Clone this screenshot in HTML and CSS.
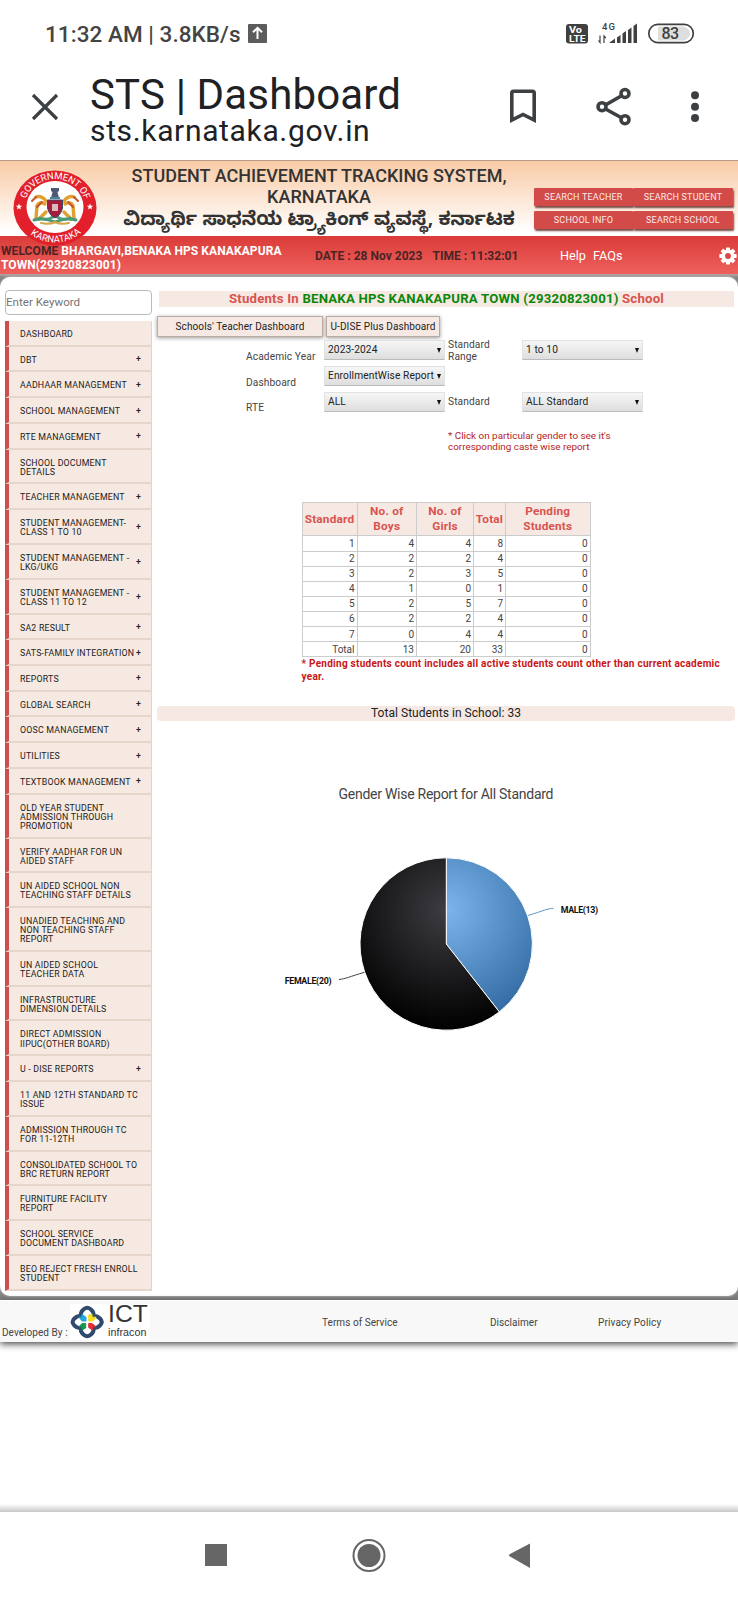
FILE: index.html
```html
<!DOCTYPE html>
<html lang="en">
<head>
<meta charset="utf-8">
<title>STS | Dashboard</title>
<link rel="stylesheet" href="styles.css">
</head>
<body>
<div class="status">
  <span class="clock">11:32 AM | 3.8KB/s</span>
  <svg class="up" width="19" height="19" viewBox="0 0 19 19"><rect width="19" height="19" rx="1" fill="#5c5c5c"/><path d="M9.5 15V4M5 8.3L9.5 3.8L14 8.3" fill="none" stroke="#fff" stroke-width="2"/></svg>
  <svg class="signals" width="132" height="24" viewBox="0 0 132 24">
    <rect x="0" y="2" width="22" height="19.500" rx="3" fill="#404040"/>
    <g font-family="Roboto, sans-serif" font-weight="700" fill="#fff"><text x="3" y="10.500" font-size="9" textLength="13" lengthAdjust="spacingAndGlyphs">Vo</text><text x="3" y="19.500" font-size="9" textLength="16.500" lengthAdjust="spacingAndGlyphs">LTE</text></g>
    <text x="36" y="8" font-family="Roboto, sans-serif" font-size="9.500" font-weight="500" fill="#404040" textLength="13">4G</text>
    <path d="M34 13.500V20.500L32.500 18.500M38 21V14L39.800 16" fill="none" stroke="#404040" stroke-width="1.200"/>
    <path d="M43 21L49 16.500V21ZM51 15.500L54.500 13V21H51ZM56.500 11.500L60 9V21H56.500ZM62 8L65.500 5.500V21H62ZM67.500 4L71 1.500V21H67.500Z" fill="#404040"/>
    <rect x="82.800" y="2.300" width="44.500" height="18.400" rx="9.200" fill="#fff" stroke="#404040" stroke-width="1.700"/>
    <path d="M92 4.500H118Q124 7 124 11.500T118 18.500H92Z" fill="#dedede"/>
    <text x="95.500" y="17" font-family="Roboto, sans-serif" font-size="16" font-weight="500" fill="#404040" textLength="17.500">83</text>
  </svg>
</div>
<div class="browser">
  <svg class="close" width="28" height="28" viewBox="0 0 28 28"><path d="M2 2L26 26M26 2L2 26" stroke="#3c4043" stroke-width="3.200"/></svg>
  <div class="page-id"><div class="page-title">STS | Dashboard</div><div class="page-url">sts.karnataka.gov.in</div></div>
  <svg class="tools" width="192" height="40" viewBox="0 0 192 40">
    <g fill="none" stroke="#3c4043" stroke-width="3.600"><path d="M3.800 6Q3.800 4.300 5.500 4.300H24.500Q26.200 4.300 26.200 6V33L15 27.500L3.800 33Z"/><path d="M117.500 6.500L94 20L117.500 33"/><g fill="#fff"><circle cx="117" cy="6.500" r="4"/><circle cx="94" cy="19.700" r="4"/><circle cx="117" cy="32.700" r="4"/></g></g>
    <g fill="#3c4043"><circle cx="187" cy="8.300" r="4"/><circle cx="187" cy="19.700" r="4"/><circle cx="187" cy="31" r="4"/></g>
  </svg>
</div>

<header class="masthead">
  <svg class="emblem" width="84" height="76" viewBox="0 0 84 76">
    <defs><path id="arcTop" d="M11.700 36.800A30.300 27.800 0 0 1 72.300 36.800"/><path id="arcBottom" d="M4.500 38A37.500 34.500 0 0 0 79.500 38"/></defs>
    <ellipse cx="42" cy="38" rx="41.500" ry="37.500" fill="#e21f2b"/><ellipse cx="42" cy="37" rx="28.500" ry="26" fill="#fff"/>
    <g fill="#fff" font-family="Roboto, sans-serif" font-size="9.500"><text><textPath href="#arcTop" startOffset="8" textLength="76">GOVERNMENT OF</textPath></text><text><textPath href="#arcBottom" startOffset="30" textLength="55">KARNATAKA</textPath></text></g>
    <path id="star" d="M6 33.500L6.900 35.800H9.200L7.400 37.300L8 39.500L6 38.200L4 39.500L4.600 37.300L2.800 35.800H5.100Z" fill="#fff"/><use href="#star" x="71"/>
    <g fill="none" stroke-linecap="round" stroke-linejoin="round"><path d="M33 31C29 26 26 26 23 27M32 34Q26 31 24 36L23 48M33 42L26 49M51 31C55 26 58 26 61 27M52 34Q58 31 60 36L61 48M51 42L58 49" stroke="#e0a032" stroke-width="3.400"/><path d="M23 27L19 31M61 27L65 31M29 32L24 37M55 32L60 37" stroke="#c95627" stroke-width="2"/><path d="M21 50Q31 47 42 52Q53 47 63 50M27 48Q35 52 42 45Q49 52 57 48" stroke="#4c9b78" stroke-width="3"/><path d="M28 53Q36 55 42 52Q48 55 56 53" stroke="#d6a447" stroke-width="2"/></g>
    <path d="M38 18H46V21L44.500 22L46 28H38L39.500 22L38 21Z" fill="#4e5975"/><path d="M34.500 30H49.500V38Q48 45 42 48Q36 45 34.500 38Z" fill="#a51c3a" stroke="#3d486d"/><path d="M39 34H45V41H39Z" fill="#dab9bc"/><path d="M37 28H47" stroke="#4784a0" stroke-width="2"/>
  </svg>
  <div class="headings"><div class="en">STUDENT ACHIEVEMENT TRACKING SYSTEM,</div><div class="en second">KARNATAKA</div><div class="kn" lang="kn">ವಿದ್ಯಾರ್ಥಿ ಸಾಧನೆಯ ಟ್ರ್ಯಾಕಿಂಗ್ ವ್ಯವಸ್ಥೆ, ಕರ್ನಾಟಕ</div></div>
  <nav class="searches"><a>SEARCH TEACHER</a><a>SEARCH STUDENT</a><a>SCHOOL INFO</a><a>SEARCH SCHOOL</a></nav>
</header>
<div class="welcome">
  <div class="who"><span class="dark">WELCOME</span> BHARGAVI,BENAKA HPS KANAKAPURA<br>TOWN(29320823001)</div>
  <div class="date">DATE : 28 Nov 2023<span>TIME : 11:32:01</span></div>
  <div class="help">Help<span>FAQs</span></div>
  <svg class="gear" width="18" height="18" viewBox="-9 -9 18 18"><g fill="#fff"><g id="teeth"><rect x="-2" y="-8.600" width="4" height="17.200" rx=".6"/><rect x="-8.600" y="-2" width="17.200" height="4" rx=".6"/></g><use href="#teeth" transform="rotate(45)"/><circle r="6.600"/></g><circle r="2.900" fill="#df4443"/></svg>
</div>

<div class="backdrop">
<main class="panel">
  <aside class="sidebar">
    <div class="keyword">Enter Keyword</div>
    <ul class="menu">
      <li>DASHBOARD</li>
      <li class="more">DBT</li>
      <li class="more">AADHAAR MANAGEMENT</li>
      <li class="more">SCHOOL MANAGEMENT</li>
      <li class="more">RTE MANAGEMENT</li>
      <li>SCHOOL DOCUMENT<br>DETAILS</li>
      <li class="more">TEACHER MANAGEMENT</li>
      <li class="more">STUDENT MANAGEMENT-<br>CLASS 1 TO 10</li>
      <li class="more">STUDENT MANAGEMENT -<br>LKG/UKG</li>
      <li class="more">STUDENT MANAGEMENT -<br>CLASS 11 TO 12</li>
      <li class="more">SA2 RESULT</li>
      <li class="more">SATS-FAMILY INTEGRATION</li>
      <li class="more">REPORTS</li>
      <li class="more">GLOBAL SEARCH</li>
      <li class="more">OOSC MANAGEMENT</li>
      <li class="more">UTILITIES</li>
      <li class="more">TEXTBOOK MANAGEMENT</li>
      <li>OLD YEAR STUDENT<br>ADMISSION THROUGH<br>PROMOTION</li>
      <li>VERIFY AADHAR FOR UN<br>AIDED STAFF</li>
      <li>UN AIDED SCHOOL NON<br>TEACHING STAFF DETAILS</li>
      <li>UNADIED TEACHING AND<br>NON TEACHING STAFF<br>REPORT</li>
      <li>UN AIDED SCHOOL<br>TEACHER DATA</li>
      <li>INFRASTRUCTURE<br>DIMENSION DETAILS</li>
      <li>DIRECT ADMISSION<br>IIPUC(OTHER BOARD)</li>
      <li class="more">U - DISE REPORTS</li>
      <li>11 AND 12TH STANDARD TC<br>ISSUE</li>
      <li>ADMISSION THROUGH TC<br>FOR 11-12TH</li>
      <li>CONSOLIDATED SCHOOL TO<br>BRC RETURN REPORT</li>
      <li>FURNITURE FACILITY<br>REPORT</li>
      <li>SCHOOL SERVICE<br>DOCUMENT DASHBOARD</li>
      <li>BEO REJECT FRESH ENROLL<br>STUDENT</li>
    </ul>
  </aside>
  <section class="content">
    <h1 class="school">Students In <b>BENAKA HPS KANAKAPURA TOWN (29320823001)</b> School</h1>
    <div class="tabs"><a class="tab wide">Schools' Teacher Dashboard</a><a class="tab">U-DISE Plus Dashboard</a></div>
    <div class="filters">
      <label class="low">Academic Year</label><div class="select">2023-2024</div><label class="range">Standard<br>Range</label><div class="select">1 to 10</div>
      <label class="low">Dashboard</label><div class="select tight">EnrollmentWise Report</div><span></span><span></span>
      <label class="low rte">RTE</label><div class="select">ALL</div><label>Standard</label><div class="select">ALL Standard</div>
    </div>
    <p class="hint">* Click on particular gender to see it's<br>corresponding caste wise report</p>
    <table class="counts">
      <colgroup><col class="c1"><col class="c2"><col class="c3"><col class="c4"><col class="c5"></colgroup>
      <thead><tr><th>Standard</th><th>No. of<br>Boys</th><th>No. of<br>Girls</th><th>Total</th><th>Pending<br>Students</th></tr></thead>
      <tbody>
        <tr><td>1</td><td>4</td><td>4</td><td>8</td><td>0</td></tr>
        <tr><td>2</td><td>2</td><td>2</td><td>4</td><td>0</td></tr>
        <tr><td>3</td><td>2</td><td>3</td><td>5</td><td>0</td></tr>
        <tr><td>4</td><td>1</td><td>0</td><td>1</td><td>0</td></tr>
        <tr><td>5</td><td>2</td><td>5</td><td>7</td><td>0</td></tr>
        <tr><td>6</td><td>2</td><td>2</td><td>4</td><td>0</td></tr>
        <tr><td>7</td><td>0</td><td>4</td><td>4</td><td>0</td></tr>
        <tr><td>Total</td><td>13</td><td>20</td><td>33</td><td>0</td></tr>
      </tbody>
    </table>
    <p class="pending">* Pending students count includes all active students count other than current academic<br>year.</p>
    <div class="sum">Total Students in School: 33</div>
    <svg class="chart" width="578" height="280" viewBox="157 770 578 280">
      <defs>
        <radialGradient id="blue" gradientUnits="userSpaceOnUse" cx="446" cy="910" r="120"><stop offset="0" stop-color="#7cb5ec"/><stop offset="1" stop-color="#2f699f"/></radialGradient>
        <radialGradient id="dark" gradientUnits="userSpaceOnUse" cx="446" cy="910" r="120"><stop offset="0" stop-color="#3d3d42"/><stop offset="1" stop-color="#000"/></radialGradient>
      </defs>
      <text x="338.500" y="799" font-size="14" fill="#444" textLength="215">Gender Wise Report for All Standard</text>
      <path d="M446.300 944V857.800A86.200 86.200 0 0 1 499.300 1011.900Z" fill="url(#blue)" stroke="#fff" stroke-width="1"/>
      <path d="M446.300 944L499.300 1011.900A86.200 86.200 0 1 1 446.300 857.800Z" fill="url(#dark)" stroke="#fff" stroke-width="1"/>
      <path d="M553.500 908.300C548 908.300 543 911 528 915.500" fill="none" stroke="#6294c4"/><path d="M339 979.500C345 979 350 976.500 364.500 972.300" fill="none" stroke="#444"/>
      <g font-size="8.800" font-weight="700" fill="#111"><text x="560.700" y="913" textLength="37.300">MALE(13)</text><text x="284.700" y="983.700" textLength="46.800">FEMALE(20)</text></g>
    </svg>
  </section>
</main>
</div>
<footer class="foot">
  <div class="dev">Developed By :</div>
  <svg class="ict" width="80" height="39" viewBox="0 -3 80 39">
    <rect width="80" height="36" fill="#fff"/>
    <path d="M10.800 12V10.500Q10.800 7.500 14 5Q17.200 2.500 20.400 5Q23.600 7.500 23.600 10.500V12H25Q27.500 12 30 14.500Q33.500 18 30 21.500Q27.500 24 25 24H23.600V25.500Q23.600 28.500 20.400 31Q17.200 33.500 14 31Q10.800 28.500 10.800 25.500V24H9.400Q6.900 24 4.400 21.500Q.9 18 4.400 14.500Q6.900 12 9.400 12Z" fill="none" stroke="#2e4b6e" stroke-width="4"/>
    <path d="M9 13.200H12V10.500L16 13.200V17H12Z" fill="#25a8df" stroke="#25a8df"/><path d="M18.700 11L22 10V13.200H26L23 17H18.700Z" fill="#f5df21" stroke="#f5df21"/><path d="M9 22.800L12 19.500H15.700V24L12 26V22.800Z" fill="#19984d" stroke="#19984d"/><path d="M18.700 19.500H22L26 22.800H22.500V26L18.700 23.500Z" fill="#e32f38" stroke="#e32f38"/>
    <text x="38" y="18" font-family="Liberation Sans, sans-serif" font-size="23" fill="#333" textLength="40" lengthAdjust="spacingAndGlyphs">ICT</text><text x="38" y="31.500" font-family="Liberation Sans, sans-serif" font-size="10.500" fill="#333" textLength="38.500" lengthAdjust="spacingAndGlyphs">infracon</text>
  </svg>
  <a class="terms">Terms of Service</a><a class="disc">Disclaimer</a><a class="priv">Privacy Policy</a>
</footer>
<div class="blank"></div>
<nav class="android">
  <svg width="330" height="40" viewBox="0 0 330 40"><g fill="#666"><rect x="5" y="9" width="22" height="22"/><circle cx="169" cy="20.500" r="11.500"/><path d="M309 20.300Q309 19.500 310 19L330 8.500V33L310 21.500Q309 21 309 20.300Z"/></g><circle cx="169" cy="20.500" r="15.500" fill="none" stroke="#666" stroke-width="2"/></svg>
</nav>
</body>
</html>
```
FILE: styles.css
```css
* { box-sizing: border-box; }
body { margin: 0; width: 738px; height: 1600px; background: #fff; font-family: Roboto, sans-serif; color: #444; overflow: hidden; white-space: nowrap; }
ul, p, h1 { margin: 0; padding: 0; }

.status { display: flex; height: 66px; padding: 21px 0 0 45px; }
.clock { width: 203px; font-size: 22.5px; line-height: 27px; font-weight: 500; color: #444; letter-spacing: .05px; }
.up { margin-top: 3px; }
.signals { margin: 1px 0 0 299px; }
.browser { display: flex; height: 94px; }
.close { margin: 27px 0 0 31px; }
.page-id { width: 418px; margin-left: 31px; color: #202124; }
.page-title { height: 44px; margin-top: 4px; font-size: 42px; line-height: 49px; letter-spacing: .15px; }
.page-url { font-size: 30px; line-height: 34px; letter-spacing: .65px; }
.tools { margin-top: 21px; }

.masthead { position: relative; display: flex; height: 76px; padding-left: 120px; background: linear-gradient(#f9cba6, #fff 95%); border-top: 1px solid #b59b87; }
.emblem { position: absolute; left: 13px; top: 9px; z-index: 2; }
.headings { width: 398px; text-align: center; color: #333; font-weight: 500; padding-top: 4px; }
.en { font-size: 18px; line-height: 21px; }
.kn { font: 700 18.8px/25px "Noto Sans Kannada", "Noto Sans", sans-serif; padding-top: 3px; }
.searches { display: grid; grid-template-columns: 99px 100px; grid-template-rows: 18px 18px; gap: 5px 0; margin: 26.5px 0 0 16px; }
.searches a { background: #d24b48; color: #fbe9e7; font-size: 9px; line-height: 18px; text-align: center; letter-spacing: .2px; box-shadow: 1px 2px 2px #7a4a44; border-radius: 1px; }
.welcome { display: flex; height: 38px; background: linear-gradient(#da3c38, #ee605d); color: #fff; }
.who { width: 315px; padding: 7.5px 0 0 1px; font-size: 12px; line-height: 14.5px; font-weight: 700; letter-spacing: .08px; }
.dark, .date { color: #4a2424; }
.date { width: 245px; font-size: 12px; line-height: 40px; font-weight: 700; letter-spacing: .02px; }
.date span { margin-left: 10px; }
.help { width: 159px; font-size: 12.7px; line-height: 40px; }
.help span { margin-left: 7px; }
.gear { margin-top: 11px; }

.backdrop { height: 1026px; padding-top: 3px; background: linear-gradient(#b5a5a3, #808080 4px); }
.panel { display: flex; height: 1019px; background: #fff; border-radius: 10px; box-shadow: 0 0 3px #ccc; }
.sidebar { width: 152px; padding: 13px 0 0 5px; }
.keyword { height: 25px; border: 1px solid #bbb; border-radius: 4px; color: #757575; font-size: 11.6px; line-height: 23px; }
.menu { list-style: none; margin-top: 6px; }
.menu li { position: relative; padding: 9px 0 5.7px 11px; border-left: 4px solid #cb4f4f; border-right: 1px solid #e4d3ca; border-bottom: 2px solid #e6d5c9; background: #f6e9e1; color: #222; font-size: 8.8px; line-height: 9.05px; letter-spacing: .2px; }
.more::after { content: "+"; position: absolute; right: 10px; top: 50%; margin-top: -3.5px; font-weight: 500; }

.content { width: 586px; padding: 14px 3px 0 5px; }
.school { height: 16px; margin: 0 1px 0 2px; background: #f6e9e3; color: #d9534f; font-size: 13.2px; line-height: 16px; font-weight: 700; text-align: center; letter-spacing: .21px; }
.school b { color: #0b870b; font-weight: 700; }
.tabs { display: flex; gap: 3px; margin-top: 9px; }
.tab { width: 114px; height: 21px; border: 1px solid #b9aaa2; background: #f6e9e3; box-shadow: 0 1px 4px #999; color: #222; font-size: 10px; line-height: 20px; text-align: center; letter-spacing: .1px; }
.tab.wide { width: 166px; }
.filters { display: grid; grid-template-columns: 78px 121px 77px 121px; grid-template-rows: 20px 20px 20px; row-gap: 6px; margin: 3px 0 0 89px; font-size: 10.2px; line-height: 20px; letter-spacing: .1px; }
.filters > label:nth-child(4n+3) { padding-left: 3px; }
.low { padding-top: 7px; }
.low.rte { padding-top: 6px; }
.range { line-height: 11.5px; margin-top: -1px; }
.select { position: relative; border: 1px solid #e2e2e2; border-bottom-color: #bbb; background: linear-gradient(#f6f6f6, #dedede); color: #222; padding-left: 3px; line-height: 18px; }
.select::after { content: ""; position: absolute; right: 3px; top: 7px; border: 2.5px solid transparent; border-top: 5px solid #111; border-bottom: 0; }
.hint { margin: 17.5px 0 0 291px; color: #b62323; font-size: 9.9px; line-height: 11.7px; }
.counts { width: 288px; margin: 49.5px 0 0 144.5px; border-collapse: collapse; table-layout: fixed; font-size: 10px; }
.c1 { width: 55px; } .c2 { width: 59.5px; } .c3 { width: 57px; } .c4 { width: 32px; } .c5 { width: 84.500px; }
.counts th { height: 33px; padding: 0; border: 1px solid #ccc; background: #f6e9e3; color: #d9534f; font-size: 11.8px; line-height: 15px; letter-spacing: .2px; }
.counts td { height: 15.1px; padding: 0 2px 0 0; border: 1px solid #ccc; text-align: right; line-height: 13px; }
.pending { height: 26px; margin: 0 0 0 144.5px; color: #c81414; font-size: 10px; line-height: 13px; font-weight: 700; letter-spacing: .26px; }
.sum { height: 15px; margin-top: 23px; border-radius: 4px; background: #f6e9e3; color: #222; font-size: 12px; line-height: 15px; text-align: center; letter-spacing: .05px; }
.chart { display: block; margin-top: 49px; font-family: Roboto, sans-serif; }

.foot { display: flex; height: 42px; background: #f8f8f8; border-top: 1px solid #fff; box-shadow: 0 2px 7px #444; font-size: 10px; line-height: 44px; letter-spacing: .05px; }
.dev { width: 70px; padding: 10px 0 0 2px; }
.ict { margin-top: 0; }
.terms { margin-left: 172px; width: 168px; }
.disc { width: 108px; }
.priv { letter-spacing: .12px; }
.blank { height: 162px; }
.android { height: 96px; padding: 31px 0 0 200px; background: linear-gradient(#fff, #c8c8c8) 0 0 / 100% 8px no-repeat; }
```
